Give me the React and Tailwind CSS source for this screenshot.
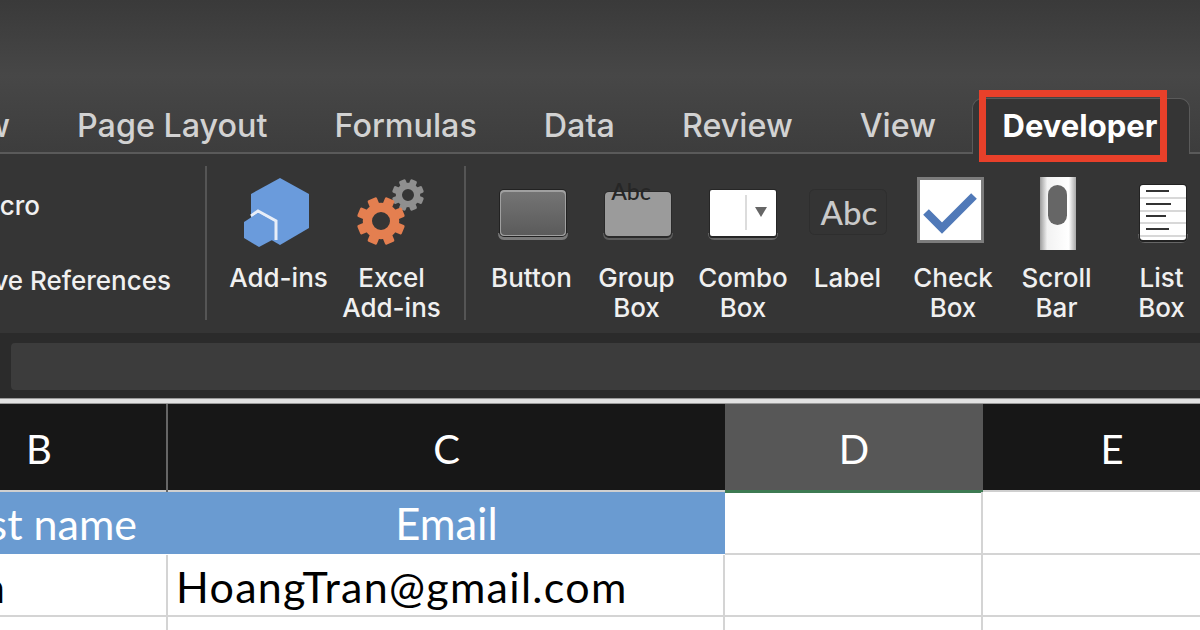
const tabs = ["Page Layout", "Formulas", "Data", "Review", "View"];

const angles = [0, 45, 90, 135, 180, 225, 270, 315];

function Gear({ cx, cy, r, hole, tooth, color }) {
  return (
    <g fill={color}>
      {angles.map((a) => (
        <rect
          key={a}
          x={cx - tooth / 2}
          y={cy - r}
          width={tooth}
          height={r - hole - 1}
          rx="1.5"
          transform={`rotate(${a + 22.5} ${cx} ${cy})`}
        />
      ))}
      <path
        fillRule="evenodd"
        d={`M${cx - r * 0.76} ${cy}a${r * 0.76} ${r * 0.76} 0 1 0 ${r * 1.52} 0a${r * 0.76} ${r * 0.76} 0 1 0 ${-r * 1.52} 0zM${cx - hole} ${cy}a${hole} ${hole} 0 1 1 ${hole * 2} 0a${hole} ${hole} 0 1 1 ${-hole * 2} 0z`}
      />
    </g>
  );
}

function AddInsIcon() {
  return (
    <svg width="113" height="88" viewBox="222 175 113 88">
      <polygon points="280,178 309,194 309,228 280,245 251,228 251,194" fill="#6a9bdc" />
      <polyline points="251,216 258,211 276,221 276,240" fill="none" stroke="#e8eef8" strokeWidth="3" />
      <polygon points="258,213 274,222 274,239 259,247 244,238 244,222" fill="#6a9bdc" />
    </svg>
  );
}

function ExcelIcon() {
  return (
    <svg width="113" height="88" viewBox="335 175 113 88">
      <Gear cx={408} cy={195} r={16} hole={6} tooth={7} color="#8f8f8f" />
      <Gear cx={381} cy={221} r={24} hole={9} tooth={10} color="#e47f50" />
    </svg>
  );
}

function ButtonIcon() {
  return (
    <svg width="105" height="88" viewBox="480 175 105 88">
      <defs>
        <linearGradient id="btn" x1="0" y1="0" x2="0" y2="1">
          <stop offset="0" stopColor="#747474" />
          <stop offset="1" stopColor="#5b5b5b" />
        </linearGradient>
      </defs>
      <path d="M499 233q0 7 6 7h58q6 0 6-7z" fill="#7a7a7a" />
      <rect x="500" y="189" width="68" height="48" rx="5" fill="#222" />
      <rect x="501" y="190" width="66" height="46" rx="4" fill="#a0a0a0" />
      <rect x="502" y="192" width="64" height="43" rx="4" fill="url(#btn)" />
    </svg>
  );
}

function GroupIcon() {
  return (
    <svg width="105" height="88" viewBox="585 175 105 88">
      <path d="M604 233q0 7 6 7h58q6 0 6-7z" fill="#5c5c5c" />
      <rect x="605" y="191" width="68" height="47" rx="5" fill="#2a2a2a" />
      <rect x="606" y="192" width="66" height="44" rx="4" fill="#9b9b9b" />
      <text x="632" y="200" textAnchor="middle" fontSize="23" fill="#262626" fontFamily="Lato, sans-serif">Abc</text>
    </svg>
  );
}

function ComboIcon() {
  return (
    <svg width="105" height="88" viewBox="690 175 105 88">
      <path d="M709 233q0 7 6 7h58q6 0 6-7z" fill="#666" />
      <rect x="710" y="189" width="68" height="49" rx="3" fill="#262626" />
      <rect x="711" y="190" width="66" height="46" rx="2" fill="#fff" />
      <rect x="746" y="195" width="2" height="35" fill="#dcdcdc" />
      <polygon points="756,207 768,207 762,217" fill="#666" />
    </svg>
  );
}

function LabelIcon() {
  return (
    <svg width="105" height="88" viewBox="795 175 105 88">
      <rect x="810.5" y="189.5" width="77" height="45" rx="5" fill="#343434" stroke="#2e2e2e" />
      <text x="850" y="225" textAnchor="middle" fontSize="33" fill="#c9c9c9" fontFamily="Lato, sans-serif">Abc</text>
    </svg>
  );
}

function CheckIcon() {
  return (
    <svg width="105" height="88" viewBox="900 175 105 88">
      <rect x="918" y="177" width="67" height="66" fill="#7c7c7c" />
      <rect x="921" y="180" width="61" height="60" fill="#fff" />
      <polyline points="927,212 943,228 975,196" fill="none" stroke="#5079b8" strokeWidth="8" />
    </svg>
  );
}

function ScrollIcon() {
  return (
    <svg width="105" height="88" viewBox="1005 175 105 88">
      <defs>
        <linearGradient id="scr" x1="0" y1="0" x2="1" y2="0">
          <stop offset="0" stopColor="#9c9c9c" />
          <stop offset="0.2" stopColor="#f2f2f2" />
          <stop offset="0.8" stopColor="#ffffff" />
          <stop offset="1" stopColor="#a8a8a8" />
        </linearGradient>
      </defs>
      <rect x="1041" y="177" width="36" height="73" fill="url(#scr)" />
      <rect x="1049" y="185" width="19" height="40" rx="9.5" fill="#666" />
    </svg>
  );
}

function ListIcon() {
  return (
    <svg width="105" height="88" viewBox="1110 175 105 88">
      <path d="M1139 234q0 9 7 9h36q7 0 7-9z" fill="#666" />
      <rect x="1140" y="184" width="48" height="58" rx="4" fill="#222" />
      <rect x="1141" y="185" width="46" height="55" rx="3" fill="#fff" />
      {[197, 210, 222, 235].map((y) => (
        <rect key={y} x="1141" y={y} width="46" height="2" fill="#d8d8d8" />
      ))}
      <rect x="1147" y="190" width="23" height="2" fill="#333" />
      <rect x="1147" y="203" width="25" height="2" fill="#333" />
      <rect x="1147" y="215" width="20" height="2" fill="#333" />
      <rect x="1147" y="228" width="23" height="2" fill="#333" />
    </svg>
  );
}

const items = [
  { lines: ["Button"], icon: <ButtonIcon /> },
  { lines: ["Group", "Box"], icon: <GroupIcon /> },
  { lines: ["Combo", "Box"], icon: <ComboIcon />, labelClass: "pl-[3px]" },
  { lines: ["Label"], icon: <LabelIcon />, labelClass: "pl-[2px]" },
  { lines: ["Check", "Box"], icon: <CheckIcon />, labelClass: "pl-[3px]" },
  { lines: ["Scroll", "Bar"], icon: <ScrollIcon /> },
  { lines: ["List", "Box"], icon: <ListIcon /> },
];

function RibbonItem({ lines, icon, width, labelClass = "" }) {
  return (
    <div className={`flex flex-col items-center shrink-0 ${width}`}>
      <div className="h-[88px] flex">{icon}</div>
      {lines.map((l) => (
        <div key={l} className={`h-[30px] leading-[30px] ${labelClass}`}>{l}</div>
      ))}
    </div>
  );
}

function Divider() {
  return <div className="w-[2px] h-[154px] mt-[12px] bg-[#555555] shrink-0" />;
}

const cols = "grid grid-cols-[168px_557px_258px_258px]";

export default function App() {
  return (
    <div className="w-[1200px] h-[630px] overflow-hidden bg-white font-['Inter',sans-serif]">
      {/* title + tabs */}
      <div className="h-[154px] bg-linear-to-b from-[#3a3a3a] via-[#474747] to-[#3d3d3d] flex items-end border-b-2 border-[#5a5a5a]">
        <div className="flex items-end text-[32.3px] font-medium text-[#d2d2d2] h-[54px] -ml-[60px] whitespace-nowrap">
          <div className="w-[70px] text-right leading-[52px]">w</div>
          <div className="flex gap-[67px] ml-[67px] leading-[52px]">
            {tabs.map((t) => (
              <div key={t}>{t}</div>
            ))}
          </div>
          <div className="relative -mb-[2px] ml-[36px] w-[218px] h-[56px] shrink-0 bg-[#353535] border border-b-0 border-[#5a5a5a] rounded-t-[10px] text-[31px] text-white font-bold text-center leading-[54px] pr-[2px]">
            Developer
            <div className="absolute left-[6px] -top-[9px] w-[188px] h-[72px] border-[7px] border-[#e8402a]" />
          </div>
        </div>
      </div>

      {/* ribbon */}
      <div className="h-[179px] bg-[#353535] flex text-[26px] font-medium text-[#f0f0f0] whitespace-nowrap">
        <div className="w-[205px] shrink-0 overflow-hidden text-right">
          <div className="mt-[37px] pr-[165px] leading-[30px]"><span className="inline-block -ml-[200px]">Record Macro</span></div>
          <div className="mt-[45px] pr-[34px] leading-[30px]"><span className="inline-block -ml-[200px]">Use Relative References</span></div>
        </div>
        <Divider />
        <div className="flex pt-[21px] pl-[15px] pr-[16px] text-center">
          <RibbonItem lines={["Add-ins"]} icon={<AddInsIcon />} width="w-[113px]" />
          <RibbonItem lines={["Excel", "Add-ins"]} icon={<ExcelIcon />} width="w-[113px]" />
        </div>
        <Divider />
        <div className="flex pt-[21px] pl-[13px]">
          {items.map((it) => (
            <RibbonItem key={it.lines[0]} lines={it.lines} icon={it.icon} labelClass={it.labelClass} width="w-[105px]" />
          ))}
        </div>
      </div>

      {/* formula bar */}
      <div className="h-[65px] bg-[#2b2b2b] pt-[10px] pl-[11px]">
        <div className="h-[47px] bg-[#3c3c3c] rounded-l-[4px]" />
      </div>
      <div className="h-[6px] bg-[#e2e2e2] border-y border-[#9a9a9a]" />

      {/* sheet */}
      <div className="font-['Lato',sans-serif]">
        <div className={`${cols} h-[88px] bg-[#171717] text-[40px] text-white text-center leading-[90px] border-b-2 border-[#cfcfcf]`}>
          <div className="border-r-2 border-[#666666]"><span className="inline-block -translate-x-[44px]">B</span></div>
          <div>C</div>
          <div className="bg-[#575757] border-b-[3px] border-[#3d7a52] h-[89px]">D</div>
          <div>E</div>
        </div>
        <div className={`${cols} grid-rows-[63px] h-[63px] text-[43px] leading-[63px]`}>
          <div className="col-span-2 h-[62px] bg-[#6a9bd1] text-white flex">
            <div className="w-[168px] shrink-0 overflow-hidden text-right pr-[31px]"><span className="inline-block -ml-[100px]">Last name</span></div>
            <div className="w-[557px] text-center text-[43.5px]">Email</div>
          </div>
          <div className="border-r-2 border-b-2 border-[#d4d4d4]" />
          <div className="border-b-2 border-[#d4d4d4]" />
        </div>
        <div className={`${cols} grid-rows-[62px] h-[62px] text-[43px] leading-[64px] text-black`}>
          <div className="border-r-2 border-b-2 border-[#d4d4d4] overflow-hidden text-right pr-[161px]"><span className="inline-block -ml-[100px]">Tran</span></div>
          <div className="border-r-2 border-b-2 border-[#d4d4d4] pl-[8px] tracking-[1.3px]">HoangTran@gmail.com</div>
          <div className="border-r-2 border-b-2 border-[#d4d4d4]" />
          <div className="border-b-2 border-[#d4d4d4]" />
        </div>
        <div className={`${cols} h-[20px]`}>
          <div className="border-r-2 border-[#d4d4d4]" />
          <div className="border-r-2 border-[#d4d4d4]" />
          <div className="border-r-2 border-[#d4d4d4]" />
          <div />
        </div>
      </div>
    </div>
  );
}
